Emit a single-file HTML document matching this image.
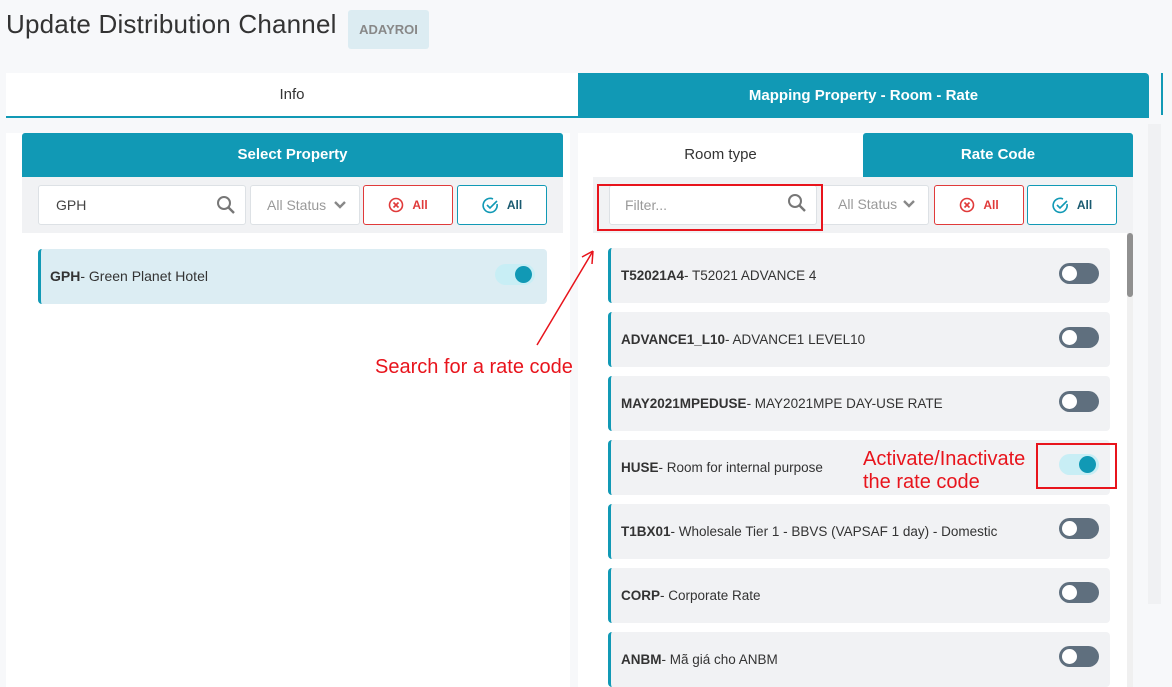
<!DOCTYPE html>
<html><head><meta charset="utf-8">
<style>
*{box-sizing:border-box;margin:0;padding:0}
body{width:1172px;height:687px;overflow:hidden;background:#f7f8fa;font-family:"Liberation Sans",sans-serif;position:relative;color:#333}
.abs{position:absolute}
.teal{background:#1199b5;color:#fff}
.inp{position:absolute;background:#fff;border:1px solid #dde1e5;border-radius:3px;height:40px;font-size:14px}
.btn{position:absolute;height:40px;border-radius:3px;background:#fff;font-size:12px;font-weight:bold;display:flex;align-items:center;justify-content:center;gap:8px}
.item{position:absolute;left:608px;width:502px;height:55px;background:#f1f2f4;border-left:3px solid #1199b5;border-radius:4px;font-size:13.5px;color:#333;padding-left:10px;line-height:55px}
.item b{font-weight:bold}
.tg{position:absolute;width:40px;height:21px;border-radius:11px;background:#5f6f7e}
.tg::after{content:"";position:absolute;left:3px;top:3px;width:15px;height:15px;border-radius:50%;background:#fff}
.on{background:#c8eef5}
.on::after{left:auto;right:3px;background:#1199b5;top:2px;width:17px;height:17px}
.red{color:#e8141c;font-size:20px}
.chev{position:absolute;top:14px}
</style></head><body>
<div class="abs" style="left:6px;top:9px;font-size:26px;color:#333;letter-spacing:0.2px">Update Distribution Channel</div>
<div class="abs" style="left:348px;top:10px;width:81px;height:39px;background:#dcecf2;border-radius:3px;color:#888;font-size:13px;font-weight:bold;text-align:center;line-height:39px">ADAYROI</div>

<div class="abs" style="left:6px;top:73px;width:572px;height:45px;background:#fff;border-bottom:2px solid #1199b5;text-align:center;line-height:43px;font-size:15px">Info</div>
<div class="abs teal" style="left:578px;top:73px;width:571px;height:45px;text-align:center;line-height:45px;font-size:15px;font-weight:bold;border-radius:0 4px 0 0">Mapping Property - Room - Rate</div>
<div class="abs" style="left:1161px;top:73px;width:2px;height:42px;background:#1199b5"></div>
<div class="abs" style="left:1148px;top:124px;width:13px;height:480px;background:#f0f1f3"></div>

<!-- left card -->
<div class="abs" style="left:6px;top:133px;width:564px;height:554px;background:#fff"></div>
<div class="abs teal" style="left:22px;top:133px;width:541px;height:44px;text-align:center;line-height:44px;font-size:15px;font-weight:bold;border-radius:3px 3px 0 0">Select Property</div>
<div class="abs" style="left:22px;top:177px;width:541px;height:56px;background:#f1f2f4"></div>
<div class="inp" style="left:38px;top:185px;width:208px;padding-left:17px;line-height:38px;color:#444">GPH
<svg class="abs" style="right:9px;top:9px" width="20" height="20" viewBox="0 0 20 20"><circle cx="8" cy="8" r="6" fill="none" stroke="#777" stroke-width="2"/><path d="M12.5 12.5L18 18" stroke="#777" stroke-width="2.4"/></svg></div>
<div class="inp" style="left:250px;top:185px;width:110px;padding-left:16px;line-height:38px;color:#999">All Status
<svg class="chev" style="left:82px" width="14" height="10" viewBox="0 0 14 10"><path d="M2 2l5 5 5-5" fill="none" stroke="#888" stroke-width="2.4"/></svg></div>
<div class="btn" style="left:363px;top:185px;width:90px;border:1px solid #e03a3a;color:#e03a3a"><svg width="16" height="16" viewBox="0 0 16 16"><circle cx="8" cy="8" r="6.5" fill="none" stroke="#e03a3a" stroke-width="1.6"/><path d="M5.5 5.5L10.5 10.5M10.5 5.5L5.5 10.5" stroke="#e03a3a" stroke-width="1.6"/></svg>All</div>
<div class="btn" style="left:457px;top:185px;width:90px;border:1px solid #1199b5;color:#1a5a70"><svg width="17" height="17" viewBox="0 0 17 17"><path d="M15 7A7 7 0 1 1 11 2" fill="none" stroke="#1199b5" stroke-width="1.6"/><path d="M5 8l3 3 7-7" fill="none" stroke="#1199b5" stroke-width="1.6"/></svg>All</div>
<div class="abs" style="left:38px;top:249px;width:509px;height:55px;background:#dcedf3;border-left:3px solid #1199b5;border-radius:4px;font-size:14px;line-height:55px;padding-left:9px"><b>GPH</b>- Green Planet Hotel</div>
<div class="tg on" style="left:495px;top:264px"></div>

<!-- right card -->
<div class="abs" style="left:578px;top:133px;width:555px;height:554px;background:#fff"></div>
<div class="abs" style="left:578px;top:133px;width:285px;height:44px;text-align:center;line-height:44px;font-size:15px">Room type</div>
<div class="abs teal" style="left:863px;top:133px;width:270px;height:44px;text-align:center;line-height:44px;font-size:15px;font-weight:bold;border-radius:3px 3px 0 0">Rate Code</div>
<div class="abs" style="left:593px;top:177px;width:540px;height:56px;background:#f1f2f4"></div>
<div class="inp" style="left:609px;top:185px;width:208px;padding-left:15px;line-height:38px;color:#999">Filter...
<svg class="abs" style="right:9px;top:7px" width="20" height="20" viewBox="0 0 20 20"><circle cx="8" cy="8" r="6" fill="none" stroke="#777" stroke-width="2"/><path d="M12.5 12.5L18 18" stroke="#777" stroke-width="2.4"/></svg></div>
<div class="inp" style="left:821px;top:185px;width:108px;padding-left:16px;line-height:36px;color:#999">All Status
<svg class="chev" style="left:80px;top:13px" width="14" height="10" viewBox="0 0 14 10"><path d="M2 2l5 5 5-5" fill="none" stroke="#888" stroke-width="2.4"/></svg></div>
<div class="btn" style="left:934px;top:185px;width:90px;border:1px solid #e03a3a;color:#e03a3a"><svg width="16" height="16" viewBox="0 0 16 16"><circle cx="8" cy="8" r="6.5" fill="none" stroke="#e03a3a" stroke-width="1.6"/><path d="M5.5 5.5L10.5 10.5M10.5 5.5L5.5 10.5" stroke="#e03a3a" stroke-width="1.6"/></svg>All</div>
<div class="btn" style="left:1027px;top:185px;width:90px;border:1px solid #1199b5;color:#1a5a70"><svg width="17" height="17" viewBox="0 0 17 17"><path d="M15 7A7 7 0 1 1 11 2" fill="none" stroke="#1199b5" stroke-width="1.6"/><path d="M5 8l3 3 7-7" fill="none" stroke="#1199b5" stroke-width="1.6"/></svg>All</div>
<div class="abs" style="left:597px;top:184px;width:226px;height:47px;border:2px solid #e8141c"></div>
<div class="abs" style="left:1127px;top:233px;width:6px;height:454px;background:#f0f0f0"></div>
<div class="abs" style="left:1127px;top:233px;width:6px;height:64px;background:#909090;border-radius:3px"></div>

<div class="item" style="top:248px"><b>T52021A4</b>- T52021 ADVANCE 4</div>
<div class="item" style="top:312px"><b>ADVANCE1_L10</b>- ADVANCE1 LEVEL10</div>
<div class="item" style="top:376px"><b>MAY2021MPEDUSE</b>- MAY2021MPE DAY-USE RATE</div>
<div class="item" style="top:440px"><b>HUSE</b>- Room for internal purpose</div>
<div class="item" style="top:504px"><b>T1BX01</b>- Wholesale Tier 1 - BBVS (VAPSAF 1 day) - Domestic</div>
<div class="item" style="top:568px"><b>CORP</b>- Corporate Rate</div>
<div class="item" style="top:632px"><b>ANBM</b>- Mã giá cho ANBM</div>
<div class="tg" style="left:1059px;top:263px"></div>
<div class="tg" style="left:1059px;top:327px"></div>
<div class="tg" style="left:1059px;top:391px"></div>
<div class="tg on" style="left:1059px;top:454px"></div>
<div class="tg" style="left:1059px;top:518px"></div>
<div class="tg" style="left:1059px;top:582px"></div>
<div class="tg" style="left:1059px;top:646px"></div>
<div class="abs" style="left:1036px;top:443px;width:81px;height:46px;border:2px solid #e8141c"></div>

<div class="abs red" style="left:375px;top:356px">Search for a rate code</div>
<div class="abs red" style="left:863px;top:448px;line-height:23px">Activate/Inactivate<br>the rate code</div>
<svg class="abs" style="left:530px;top:245px" width="70" height="105"><path d="M7 100L63 6M63 6L52 12M63 6L62 19" stroke="#e8141c" stroke-width="1.5" fill="none"/></svg>
</body></html>
